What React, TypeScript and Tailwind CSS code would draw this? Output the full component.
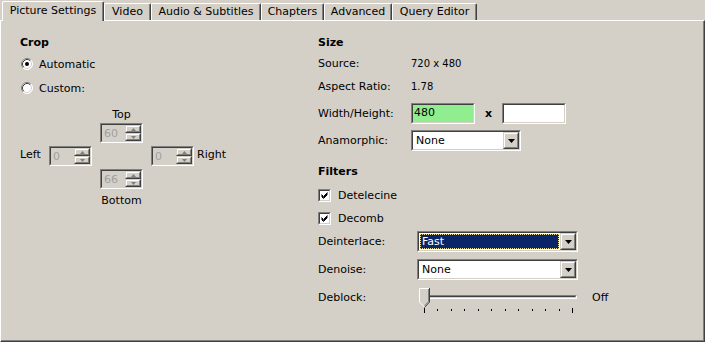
import React from 'react';

// Windows classic 3D edges
function Sunken({ className = '', inner = '', children }: { className?: string; inner?: string; children?: React.ReactNode }) {
  return (
    <div className={`border border-t-[#808080] border-l-[#808080] border-r-white border-b-white ${className}`}>
      <div className={`h-full border border-t-[#404040] border-l-[#404040] border-r-[#d4d0c8] border-b-[#d4d0c8] ${inner}`}>
        {children}
      </div>
    </div>
  );
}

function Raised({ className = '', children }: { className?: string; children?: React.ReactNode }) {
  return (
    <div className={`border border-t-[#d4d0c8] border-l-[#d4d0c8] border-r-[#404040] border-b-[#404040] ${className}`}>
      <div className="h-full border border-t-white border-l-white border-r-[#808080] border-b-[#808080] bg-[#d4d0c8] flex items-center justify-center">
        {children}
      </div>
    </div>
  );
}

function Spinner({ value }: { value: string }) {
  return (
    <Sunken className="w-[43px] h-[20px]" inner="flex bg-[#d4d0c8]">
      <div className="flex-1 pl-[2px] leading-[17px] text-[#a0a0a0]">{value}</div>
      <div className="flex flex-col w-[16px]">
        <Raised className="h-[8px]">
          <svg width="5" height="3" viewBox="0 0 5 3">
            <path d="M2.5 0 L5 3 L0 3 Z" fill="#808080" />
          </svg>
        </Raised>
        <Raised className="h-[8px]">
          <svg width="5" height="3" viewBox="0 0 5 3">
            <path d="M0 0 L5 0 L2.5 3 Z" fill="#808080" />
          </svg>
        </Raised>
      </div>
    </Sunken>
  );
}

function Combo({ value, width, selected = false }: { value: string; width: string; selected?: boolean }) {
  return (
    <Sunken className={`${width} h-[21px]`} inner="flex bg-white">
      <div className="flex-1 p-[1px]">
        {selected ? (
          <div className="h-full bg-[#0a246a] text-white border border-dotted border-[#e8e0a0] leading-[14px] pl-[1px]">{value}</div>
        ) : (
          <div className="h-full leading-[16px] pl-[2px]">{value}</div>
        )}
      </div>
      <Raised className="w-[16px] h-full">
        <svg width="7" height="4" viewBox="0 0 7 4">
          <path d="M0 0 L7 0 L3.5 4 Z" fill="#000" />
        </svg>
      </Raised>
    </Sunken>
  );
}

function Radio({ checked }: { checked?: boolean }) {
  return (
    <svg width="12" height="12" viewBox="0 0 12 12">
      <circle cx="6" cy="6" r="5.5" fill="#fff" />
      <path d="M2.11 9.89 A5.5 5.5 0 0 1 9.89 2.11" fill="none" stroke="#808080" />
      <path d="M9.89 2.11 A5.5 5.5 0 0 1 2.11 9.89" fill="none" stroke="#fff" />
      <path d="M2.82 9.18 A4.5 4.5 0 0 1 9.18 2.82" fill="none" stroke="#404040" />
      <path d="M9.18 2.82 A4.5 4.5 0 0 1 2.82 9.18" fill="none" stroke="#d4d0c8" />
      {checked && <circle cx="6" cy="6" r="2" fill="#000" />}
    </svg>
  );
}

function Check() {
  return (
    <Sunken className="w-[13px] h-[13px]" inner="bg-white flex items-center justify-center">
      <svg width="7" height="7" viewBox="0 0 7 7">
        <path d="M0.5 2.5 L2.5 4.5 L6.5 0.5 M0.5 3.5 L2.5 5.5 L6.5 1.5 M0.5 4.5 L2.5 6.5 L6.5 2.5" fill="none" stroke="#000" strokeWidth="1" />
      </svg>
    </Sunken>
  );
}

function Slider() {
  const ticks = Array.from({ length: 12 }, (_, i) => 7.5 + Math.round((i * 148) / 11));
  return (
    <div className="relative w-[160px] h-[28px]">
      <Sunken className="absolute left-[3px] top-[7px] w-[157px] h-[4px]" inner="bg-[#d4d0c8]" />
      <svg className="absolute left-[2px] top-0" width="11" height="20" viewBox="0 0 11 20">
        <path d="M0 0 H11 V14 L5.5 19.5 L0 14 Z" fill="#d4d0c8" />
        <path d="M0.5 14 V0.5 H10" fill="none" stroke="#fff" />
        <path d="M0.5 14 L5.5 19" fill="none" stroke="#fff" />
        <path d="M10.5 0 V14 L5.5 19.5" fill="none" stroke="#404040" />
        <path d="M9.5 1 V13.6 L5.5 17.8" fill="none" stroke="#808080" />
      </svg>
      <svg className="absolute left-0 top-[20px]" width="160" height="6" viewBox="0 0 160 6">
        {ticks.map((x, i) => (
          <line key={x} x1={x} x2={x} y1={i === 0 || i === 11 ? 0 : 1} y2={i === 0 || i === 11 ? 5 : 3} stroke="#000" strokeWidth="1" />
        ))}
      </svg>
    </div>
  );
}

const tabs = [
  { label: 'Picture Settings', w: 'w-[102px]' },
  { label: 'Video', w: 'w-[47px]' },
  { label: 'Audio & Subtitles', w: 'w-[110px]' },
  { label: 'Chapters', w: 'w-[63px]' },
  { label: 'Advanced', w: 'w-[68px]' },
  { label: 'Query Editor', w: 'w-[85px]' },
];

export default function App() {
  return (
    <div className="w-[705px] h-[342px] overflow-hidden bg-[#d4d0c8] text-black font-['DejaVu_Sans',sans-serif] text-[11px]">
      {/* Tab strip */}
      <div className="flex h-[20px] pl-[2px]">
        {tabs.map((t, i) =>
          i === 0 ? (
            <div
              key={t.label}
              className={`${t.w} relative z-10 mt-[1px] h-[20px] bg-[#d4d0c8] border-l border-t border-r border-l-white border-t-white border-r-[#404040] rounded-t-[2px] shadow-[inset_-1px_0_0_#808080] flex justify-center pt-[2px] leading-[14px] whitespace-nowrap`}
            >
              {t.label}
            </div>
          ) : (
            <div
              key={t.label}
              className={`${t.w} mt-[3px] h-[17px] border-l border-t border-r border-l-white border-t-white border-r-[#404040] rounded-t-[2px] shadow-[inset_-1px_0_0_#808080] flex justify-center leading-[16px] whitespace-nowrap`}
            >
              {t.label}
            </div>
          )
        )}
      </div>

      {/* Panel */}
      <div className="h-[322px] border border-t-white border-l-white border-r-[#404040] border-b-[#404040]">
        <div className="h-full flex border-r border-b border-r-[#808080] border-b-[#808080]">
          {/* Crop */}
          <div className="w-[317px] pl-[19px] pt-[14px] flex flex-col">
            <div className="h-[14px] leading-[16px] font-bold">Crop</div>
            <div className="mt-[7px] h-[16px] flex items-center">
              <div className="ml-[1px]"><Radio checked /></div>
              <span className="ml-[6px] pt-[2px]">Automatic</span>
            </div>
            <div className="mt-[8px] h-[16px] flex items-center">
              <div className="ml-[1px]"><Radio /></div>
              <span className="ml-[6px] pt-[2px]">Custom:</span>
            </div>
            <div className="mt-[11px] ml-[80px] w-[43px] h-[14px] leading-[16px] flex justify-center">Top</div>
            <div className="mt-[2px] ml-[80px]"><Spinner value="60" /></div>
            <div className="mt-[3px] h-[20px] flex items-center">
              <span className="w-[29px] pb-[1px]">Left</span>
              <Spinner value="0" />
              <div className="w-[59px]" />
              <Spinner value="0" />
              <span className="ml-[3px] pb-[1px]">Right</span>
            </div>
            <div className="mt-[3px] ml-[80px]"><Spinner value="66" /></div>
            <div className="mt-[4px] ml-[80px] w-[43px] h-[14px] leading-[16px] flex justify-center whitespace-nowrap">Bottom</div>
          </div>

          {/* Size & Filters */}
          <div className="flex-1 pt-[14px] flex flex-col">
            <div className="h-[14px] leading-[16px] font-bold">Size</div>
            <div className="mt-[7px] h-[14px] leading-[16px] flex">
              <span className="w-[93px]">Source:</span>
              <span className="text-[10px]">720 x 480</span>
            </div>
            <div className="mt-[9px] h-[14px] leading-[16px] flex">
              <span className="w-[93px]">Aspect Ratio:</span>
              <span className="text-[10px]">1.78</span>
            </div>
            <div className="mt-[10px] h-[21px] flex items-center">
              <span className="w-[93px] pt-[2px]">Width/Height:</span>
              <Sunken className="w-[64px] h-[21px]" inner="bg-[#90ee90] pl-[1px] leading-[16px]">480</Sunken>
              <span className="ml-[10px] w-[7px] font-bold pt-[2px]">x</span>
              <Sunken className="ml-[10px] w-[64px] h-[21px]" inner="bg-white" />
            </div>
            <div className="mt-[6px] h-[21px] flex items-center">
              <span className="w-[93px] pt-[1px]">Anamorphic:</span>
              <Combo value="None" width="w-[110px]" />
            </div>
            <div className="mt-[13px] h-[14px] leading-[16px] font-bold">Filters</div>
            <div className="mt-[9px] h-[16px] flex items-center">
              <Check />
              <span className="ml-[7px] pt-[2px]">Detelecine</span>
            </div>
            <div className="mt-[7px] h-[16px] flex items-center">
              <Check />
              <span className="ml-[7px] pt-[2px]">Decomb</span>
            </div>
            <div className="mt-[5px] h-[21px] flex items-center">
              <span className="w-[99px] pt-[1px]">Deinterlace:</span>
              <Combo value="Fast" width="w-[161px]" selected />
            </div>
            <div className="mt-[7px] h-[21px] flex items-center">
              <span className="w-[99px] pt-[1px]">Denoise:</span>
              <Combo value="None" width="w-[161px]" />
            </div>
            <div className="mt-[8px] flex items-start">
              <span className="w-[99px] h-[18px] leading-[20px]">Deblock:</span>
              <Slider />
              <span className="ml-[15px] h-[18px] leading-[20px]">Off</span>
            </div>
          </div>
        </div>
      </div>
    </div>
  );
}
